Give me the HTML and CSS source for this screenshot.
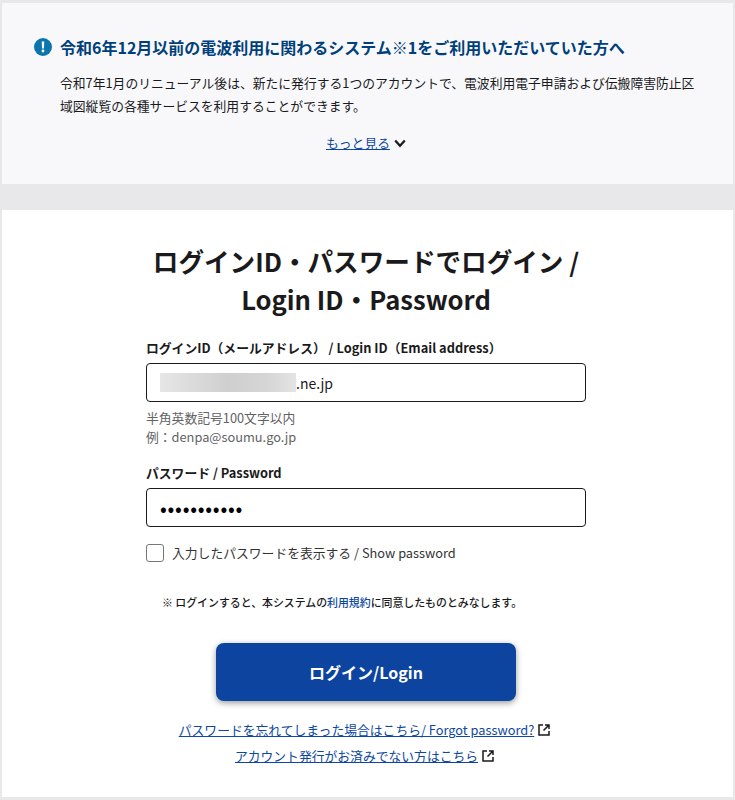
FILE: index.html
```html
<!DOCTYPE html>
<html lang="ja">
<head>
    <meta charset="UTF-8">
    <meta name="viewport" content="width=device-width, initial-scale=1.0">
    <title>ログイン</title>
    <link rel="stylesheet" href="styles.css">
</head>
<body>
    <section class="notice">
        <h2 class="notice-title">
            <svg class="notice-icon" viewBox="0 0 18 18" width="18" height="18" aria-hidden="true">
                <circle cx="9" cy="9" r="9" fill="#0b76ac"/>
                <path d="M7.7 3.6h2.6l-.4 7h-1.8z" fill="#fff"/>
                <circle cx="9" cy="13" r="1.4" fill="#fff"/>
            </svg>
            令和6年12月以前の電波利用に関わるシステム※1をご利用いただいていた方へ
        </h2>
        <p class="notice-text">令和7年1月のリニューアル後は、新たに発行する1つのアカウントで、電波利用電子申請および伝搬障害防止区域図縦覧の各種サービスを利用することができます。</p>
        <div class="more">
            <a href="#">もっと見る</a>
            <svg viewBox="0 0 12 9" width="12" height="9" aria-hidden="true">
                <path d="M1.2 1.5 6 6.8l4.8-5.3" fill="none" stroke="#1a1a1c" stroke-width="2.2"/>
            </svg>
        </div>
    </section>

    <main class="login">
        <h1>ログインID・パスワードでログイン /<br>Login ID・Password</h1>
        <form class="login-form">
            <div class="field-label">ログインID（メールアドレス） / Login ID（Email address）</div>
            <div class="input-box">
                <span class="blur"></span><span class="input-value">.ne.jp</span>
            </div>
            <p class="hint">半角英数記号100文字以内<br>例：denpa@soumu.go.jp</p>

            <div class="field-label pass-label">パスワード / Password</div>
            <div class="input-box dots">•••••••••••</div>

            <div class="show-pass">
                <span class="checkbox"></span>
                <span>入力したパスワードを表示する / Show password</span>
            </div>

            <p class="terms">※ ログインすると、本システムの<a href="#">利用規約</a>に同意したものとみなします。</p>

            <button type="button" class="login-btn">ログイン/Login</button>

            <div class="links">
                <p>
                    <a href="#">パスワードを忘れてしまった場合はこちら/ Forgot password?</a>
                    <svg class="ext" viewBox="0 0 14 14" width="14" height="14" aria-hidden="true">
                        <path d="M6 2H2v10h10V8M8 2h4v4M12 2 6.5 7.5" fill="none" stroke="#1a1a1c" stroke-width="1.5"/>
                    </svg>
                </p>
                <p>
                    <a href="#">アカウント発行がお済みでない方はこちら</a>
                    <svg class="ext" viewBox="0 0 14 14" width="14" height="14" aria-hidden="true">
                        <path d="M6 2H2v10h10V8M8 2h4v4M12 2 6.5 7.5" fill="none" stroke="#1a1a1c" stroke-width="1.5"/>
                    </svg>
                </p>
            </div>
        </form>
    </main>
</body>
</html>
```

FILE: styles.css
```css
* {
    box-sizing: border-box;
}
body {
    margin: 0;
    padding: 3px 2px;
    height: 800px;
    overflow: hidden;
    background-color: #e8e8ea;
    color: #1a1a1c;
    font-family: "Noto Sans CJK JP", "Noto Sans", sans-serif;
}
a {
    color: #0d47a1;
}
.notice {
    height: 181px;
    padding: 32px 32px 0;
    background-color: #f8f8fb;
}
.notice-title {
    display: flex;
    align-items: center;
    gap: 8px;
    margin: 0;
    font-size: 16px;
    line-height: 24px;
    font-weight: 700;
    color: #00407a;
    white-space: nowrap;
}
.notice-icon {
    flex-shrink: 0;
}
.notice-text {
    margin: 12px 0 0 26px;
    font-size: 12.8px;
    line-height: 23px;
}
.more {
    display: flex;
    justify-content: center;
    align-items: center;
    gap: 4px;
    margin-top: 16px;
    padding-right: 3px;
    font-size: 12.8px;
    line-height: 20px;
}
.login {
    margin-top: 26px;
    height: 587px;
    padding-top: 32px;
    background-color: #fff;
}
.login h1 {
    margin: 0;
    padding-right: 3px;
    font-size: 25.6px;
    line-height: 38px;
    font-weight: 700;
    text-align: center;
}
.login-form {
    width: 440px;
    margin: 20px auto 0 144px;
}
.field-label {
    font-size: 12.8px;
    line-height: 20px;
    font-weight: 700;
}
.input-box {
    display: flex;
    align-items: center;
    height: 39px;
    margin-top: 5px;
    padding: 0 13px;
    border: 1px solid #1a1a1c;
    border-radius: 4px;
}
.input-value {
    font-size: 14px;
    color: #1a1a1c;
}
.blur {
    width: 136px;
    height: 19px;
    background: linear-gradient(90deg, #e6e6e6, #cfcfcf 50%, #d6d6d6 80%, #e4e4e4);
}
.hint {
    margin: 6px 0 0;
    font-size: 12.8px;
    line-height: 19px;
    color: #626264;
}
.pass-label {
    margin-top: 17px;
}
.dots {
    font-size: 20px;
    letter-spacing: 0.75px;
    color: #000;
}
.show-pass {
    display: flex;
    align-items: center;
    gap: 8px;
    margin-top: 16px;
    font-size: 12.8px;
    line-height: 19px;
    color: #333;
}
.checkbox {
    width: 18px;
    height: 18px;
    border: 1px solid #77777a;
    border-radius: 3px;
    background-color: #fff;
}
.terms {
    margin: 32px 0 0 16px;
    font-size: 10.9px;
    line-height: 16px;
    font-weight: 500;
}
.terms a {
    text-decoration: none;
}
.login-btn {
    display: block;
    width: 300px;
    height: 58px;
    margin: 33px 0 0 70px;
    border: none;
    border-radius: 8px;
    background-color: #0d449f;
    box-shadow: 0 2px 6px rgba(0, 0, 0, 0.4);
    color: #fff;
    font-family: inherit;
    font-size: 16px;
    font-weight: 700;
}
.links {
    margin-top: 19px;
    padding-right: 2px;
    font-size: 12.8px;
    line-height: 20px;
    text-align: center;
}
.links p {
    display: flex;
    justify-content: center;
    align-items: center;
    gap: 3px;
    margin: 0 0 6px;
}
```
